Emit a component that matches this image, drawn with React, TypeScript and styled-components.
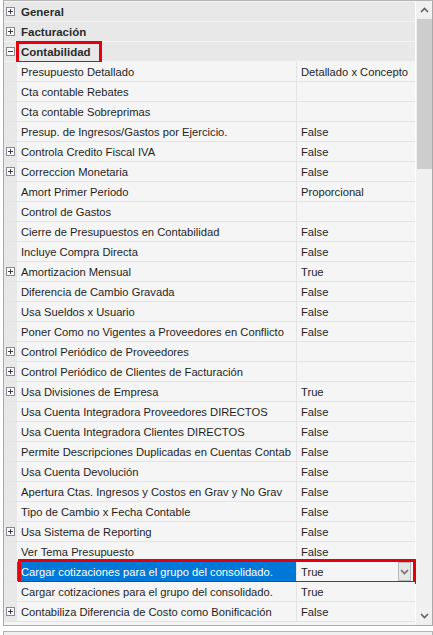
import styled, { createGlobalStyle } from 'styled-components'

interface PropRow {
    name: string
    value: string
    expand?: boolean
    selected?: boolean
}

const categories = ["General", "Facturación"]

const rows: PropRow[] = [
    { name: "Presupuesto Detallado", value: "Detallado x Concepto" },
    { name: "Cta contable Rebates", value: "" },
    { name: "Cta contable Sobreprimas", value: "" },
    { name: "Presup. de Ingresos/Gastos por Ejercicio.", value: "False" },
    { name: "Controla Credito Fiscal IVA", value: "False", expand: true },
    { name: "Correccion Monetaria", value: "False", expand: true },
    { name: "Amort Primer Periodo", value: "Proporcional" },
    { name: "Control de Gastos", value: "" },
    { name: "Cierre de Presupuestos en Contabilidad", value: "False" },
    { name: "Incluye Compra Directa", value: "False" },
    { name: "Amortizacion Mensual", value: "True", expand: true },
    { name: "Diferencia de Cambio Gravada", value: "False" },
    { name: "Usa Sueldos x Usuario", value: "False" },
    { name: "Poner Como no Vigentes a Proveedores en Conflicto", value: "False" },
    { name: "Control Periódico de Proveedores", value: "", expand: true },
    { name: "Control Periódico de Clientes de Facturación", value: "", expand: true },
    { name: "Usa Divisiones de Empresa", value: "True", expand: true },
    { name: "Usa Cuenta Integradora Proveedores DIRECTOS", value: "False" },
    { name: "Usa Cuenta Integradora Clientes DIRECTOS", value: "False" },
    { name: "Permite Descripciones Duplicadas en Cuentas Contab", value: "False" },
    { name: "Usa Cuenta Devolución", value: "False" },
    { name: "Apertura Ctas. Ingresos y Costos en Grav y No Grav", value: "False" },
    { name: "Tipo de Cambio x Fecha Contable", value: "False" },
    { name: "Usa Sistema de Reporting", value: "False", expand: true },
    { name: "Ver Tema Presupuesto", value: "False" },
    { name: "Cargar cotizaciones para el grupo del consolidado.", value: "True", selected: true },
    { name: "Cargar cotizaciones para el grupo del consolidado.", value: "True" },
    { name: "Contabiliza Diferencia de Costo como Bonificación", value: "False", expand: true },
]

const ExpandBox = ({ open }: { open?: boolean }) => (
    <svg width="9" height="9" viewBox="0 0 9 9">
        <rect x="0.5" y="0.5" width="8" height="8" fill="#fbfbfb" stroke="#8a8a8a" />
        <line x1="2" y1="4.5" x2="7" y2="4.5" stroke="#2d3f5a" />
        {!open && <line x1="4.5" y1="2" x2="4.5" y2="7" stroke="#2d3f5a" />}
    </svg>
)

const Chevron = ({ up, color = "#606060" }: { up?: boolean, color?: string }) => (
    <svg width="9" height="6" viewBox="0 0 9 6">
        <polyline
            points={up ? "1,5 4.5,1.5 8,5" : "1,1 4.5,4.5 8,1"}
            fill="none"
            stroke={color}
            strokeWidth="1.6"
        />
    </svg>
)

const App = () => {
    return (
        <>
            <GlobalStyle />
            <Frame>
                <Grid>
                    {
                        categories.map(cat => (
                            <Row key={cat}>
                                <Margin><ExpandBox /></Margin>
                                <CategoryCell>{cat}</CategoryCell>
                            </Row>
                        ))
                    }
                    <Row>
                        <Margin><ExpandBox open /></Margin>
                        <CategoryCell>
                            <Marked>Contabilidad</Marked>
                        </CategoryCell>
                    </Row>
                    {
                        rows.map((row, index) => (
                            <Row key={index} property>
                                <Margin>{row.expand && <ExpandBox />}</Margin>
                                <NameCell selected={row.selected}>{row.name}</NameCell>
                                <ValueCell>
                                    <span>{row.value}</span>
                                    {
                                        row.selected &&
                                        <DropButton><Chevron color="#707070" /></DropButton>
                                    }
                                </ValueCell>
                                {row.selected && <Highlight />}
                            </Row>
                        ))
                    }
                </Grid>
                <ScrollBar>
                    <ArrowButton><Chevron up /></ArrowButton>
                    <Track><Thumb /></Track>
                    <ArrowButton><Chevron /></ArrowButton>
                </ScrollBar>
            </Frame>
            <Footer />
        </>
    )
}
export default App


const GlobalStyle = createGlobalStyle`
    body{
        margin: 0;
        background: #ffffff;
        font-family: "Liberation Sans", Arial, sans-serif;
        font-size: 11.2px;
        color: #1f1f1f;
    }
`
const Frame = styled.div`
    display: flex;
    box-sizing: border-box;
    width: 430px;
    height: 626px;
    margin: 0 0 0 3px;
    border: 1px solid #a9a9a9;
    border-top-color: #b4b4b4;
    background: #f5f5f5;
    overflow: hidden;
`
const Grid = styled.div`
    display: flex;
    flex-direction: column;
    flex: 1;
    padding-top: 1px;
    border-right: 1px solid #ffffff;
`
const Row = styled.div<{ property?: boolean }>`
    position: relative;
    display: grid;
    grid-template-columns: 13px 280px 1fr;
    height: 20px;
    flex-shrink: 0;
    box-sizing: border-box;
    border-bottom: 1px solid ${p => p.property ? "#e4e4e4" : "#f3f3f3"};
    background: ${p => p.property ? "#f5f5f5" : "#e8e8e8"};
`
const Margin = styled.div`
    display: flex;
    align-items: center;
    justify-content: center;
    background: #e8e8e8;
`
const CategoryCell = styled.div`
    grid-column: 2 / 4;
    display: flex;
    align-items: center;
    padding-left: 4px;
    font-weight: bold;
    font-size: 11.5px;
    color: #2b2b2b;
`
const Marked = styled.span`
    position: relative;

    &::after{
        content: "";
        position: absolute;
        left: -5px;
        right: -11px;
        top: -5px;
        bottom: -6px;
        border: 3px solid #e4000f;
    }
`
const NameCell = styled.div<{ selected?: boolean }>`
    display: flex;
    align-items: center;
    padding-left: 4px;
    white-space: nowrap;
    overflow: hidden;
    border-right: 1px solid #e4e4e4;
    background: ${p => p.selected ? "#0078d7" : "transparent"};
    color: ${p => p.selected ? "#ffffff" : "inherit"};
`
const ValueCell = styled.div`
    display: flex;
    align-items: center;
    justify-content: space-between;
    padding-left: 4px;
    padding-right: 4px;
    white-space: nowrap;
    overflow: hidden;
`
const DropButton = styled.div`
    display: flex;
    align-items: center;
    justify-content: center;
    box-sizing: border-box;
    width: 13px;
    height: 19px;
    border: 1px solid #b9b9b9;
    background: #e6e6e6;
`
const Highlight = styled.div`
    position: absolute;
    left: 14px;
    right: -1px;
    top: -3px;
    bottom: -3px;
    border: 3px solid #e4000f;
    pointer-events: none;
`
const ScrollBar = styled.div`
    display: flex;
    flex-direction: column;
    width: 16px;
    background: #f0f0f0;
`
const ArrowButton = styled.div`
    display: flex;
    align-items: center;
    justify-content: center;
    height: 18px;
    flex-shrink: 0;
`
const Track = styled.div`
    flex: 1;
`
const Thumb = styled.div`
    height: 150px;
    margin: 0 0 0 1px;
    background: #cdcdcd;
`
const Footer = styled.div`
    box-sizing: border-box;
    width: 430px;
    height: 20px;
    margin: 5px 0 0 3px;
    border: 1px solid #b4b4b4;
    background: #f0f0f0;
`
